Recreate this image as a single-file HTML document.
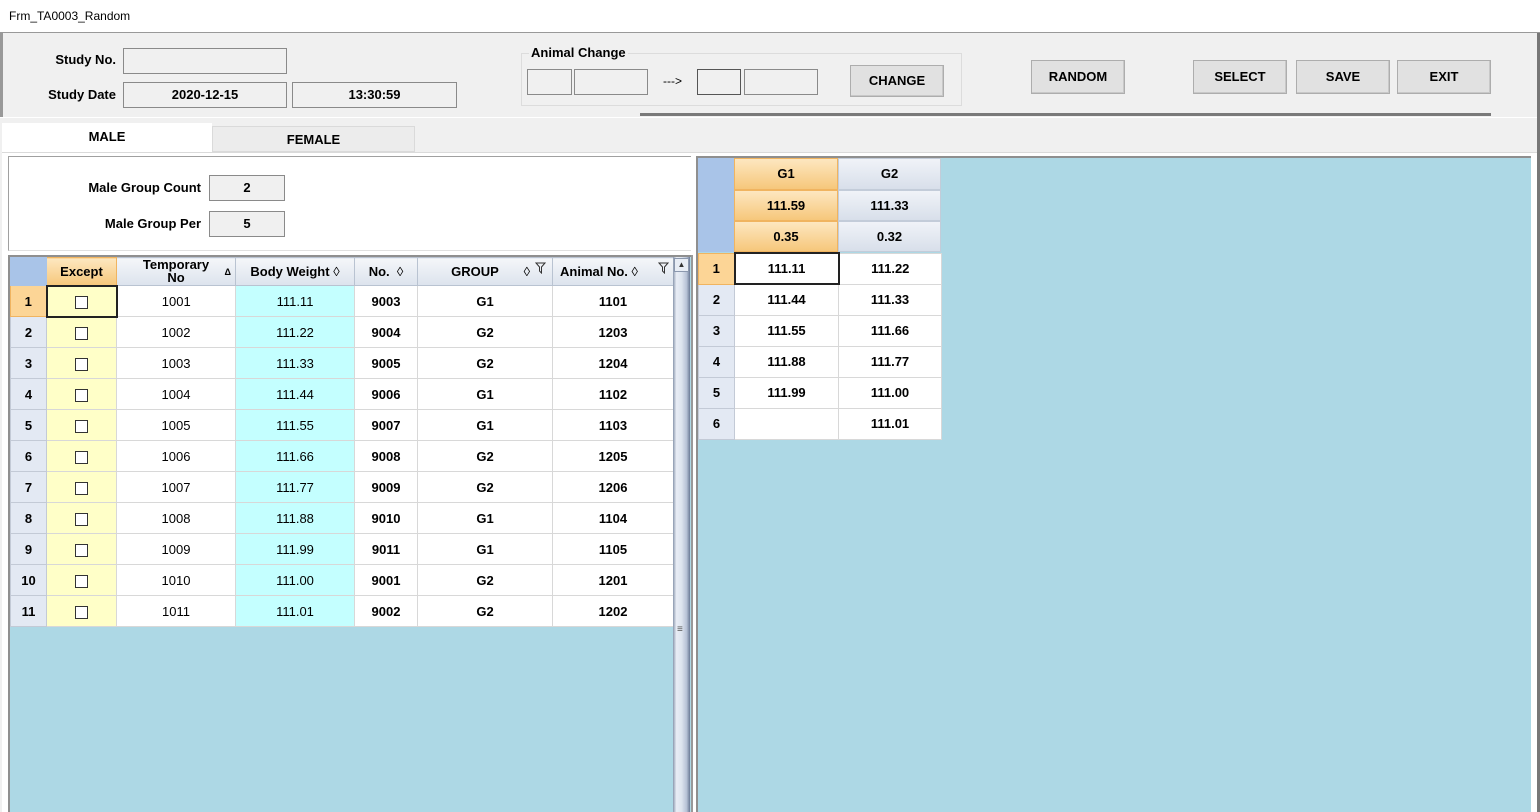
<!DOCTYPE html>
<html><head><meta charset="utf-8">
<style>
*{box-sizing:border-box;margin:0;padding:0}
body{width:1540px;height:812px;overflow:hidden;background:#f0f0f0;font-family:"Liberation Sans","Noto Sans CJK KR",sans-serif;position:relative;font-size:13px;color:#000}
.a{position:absolute}
.b{font-weight:bold}
.box{position:absolute;border:1px solid #8a8a8a;background:#f0f0f0;text-align:center;font-weight:bold;font-size:13px}
.btn{position:absolute;border:1px solid #adadad;background:#e1e1e1;text-align:center;font-weight:bold;font-size:13px;box-shadow:inset -1px -1px 0 #c8c8c8}
.lbl{position:absolute;font-weight:bold;text-align:right;font-size:13px}
table{border-collapse:collapse;position:absolute;table-layout:fixed}
td{border:1px solid #d8d8d8;text-align:center;height:31px;font-size:13px;font-weight:bold;overflow:hidden;white-space:nowrap;background:#fff}
td.rh{background:#e3e9f3;border-color:#c3cad6}
td.ex{background:#ffffc8}
td.bw{background:#c4ffff;font-weight:normal}
td.tn{font-weight:normal}
th{height:28px;font-size:13px;font-weight:bold;background:linear-gradient(#f4f6f9,#dce3ed);border:1px solid #b9c3d1;white-space:nowrap;overflow:hidden;position:relative}
.cb{display:inline-block;width:13px;height:13px;border:1px solid #333;background:#fff;vertical-align:middle}
.hg{background:linear-gradient(#fde7c0,#f6c77b);border:1px solid #f0b460}
.hb{background:linear-gradient(#f0f3f8,#d8dfea);border:1px solid #c3ccd9}
.fl{position:absolute;top:4px;width:11px;height:12px}
</style></head><body>
<div class="a" style="left:0;top:0;width:1540px;height:33px;background:#fff;border-bottom:1px solid #999"></div>
<div class="a" style="left:9px;top:9px;font-size:12px">Frm_TA0003_Random</div>
<div class="a" style="left:1537px;top:33px;width:3px;height:779px;background:#777"></div>
<div class="a" style="left:0;top:33px;width:3px;height:85px;background:#999"></div>

<div class="lbl" style="left:30px;top:52px;width:86px">Study No.</div>
<div class="box" style="left:123px;top:48px;width:164px;height:26px"></div>
<div class="lbl" style="left:20px;top:87px;width:96px">Study Date</div>
<div class="box" style="left:123px;top:82px;width:164px;height:26px;line-height:24px">2020-12-15</div>
<div class="box" style="left:292px;top:82px;width:165px;height:26px;line-height:24px">13:30:59</div>

<div class="a" style="left:521px;top:53px;width:441px;height:53px;border:1px solid #dcdcdc"></div>
<div class="a b" style="left:529px;top:45px;background:#f0f0f0;padding:0 2px">Animal Change</div>
<div class="box" style="left:527px;top:69px;width:45px;height:26px"></div>
<div class="box" style="left:574px;top:69px;width:74px;height:26px"></div>
<div class="a" style="left:663px;top:74px;font-size:12px">---&gt;</div>
<div class="box" style="left:697px;top:69px;width:44px;height:26px;border-color:#555"></div>
<div class="box" style="left:744px;top:69px;width:74px;height:26px"></div>
<div class="btn" style="left:850px;top:65px;width:94px;height:32px;line-height:30px">CHANGE</div>
<div class="btn" style="left:1031px;top:60px;width:94px;height:34px;line-height:32px">RANDOM</div>
<div class="btn" style="left:1193px;top:60px;width:94px;height:34px;line-height:32px">SELECT</div>
<div class="btn" style="left:1296px;top:60px;width:94px;height:34px;line-height:32px">SAVE</div>
<div class="btn" style="left:1397px;top:60px;width:94px;height:34px;line-height:32px">EXIT</div>
<div class="a" style="left:640px;top:113px;width:851px;height:3px;background:#7a7a7a"></div>
<div class="a" style="left:0;top:117px;width:1537px;height:1px;background:#fff"></div>

<div class="a b" style="left:2px;top:123px;width:210px;height:31px;background:#fff;text-align:center;line-height:28px">MALE</div>
<div class="a b" style="left:212px;top:126px;width:203px;height:26px;background:#ececec;border:1px solid #dadada;text-align:center;line-height:26px">FEMALE</div>
<div class="a" style="left:2px;top:152px;width:1535px;height:660px;background:#fff;border-top:1px solid #dadada"></div>

<div class="a" style="left:8px;top:156px;width:683px;height:95px;background:#fff;border:1px solid #a0a0a0;border-right:none;border-bottom:1px solid #e0e0e0"></div>
<div class="lbl" style="left:40px;top:180px;width:161px">Male Group Count</div>
<div class="box" style="left:209px;top:175px;width:76px;height:26px;line-height:24px">2</div>
<div class="lbl" style="left:60px;top:216px;width:141px">Male Group Per</div>
<div class="box" style="left:209px;top:211px;width:76px;height:26px;line-height:24px">5</div>

<div class="a" style="left:8px;top:255px;width:683px;height:557px;background:#add8e5;border-left:2px solid #8f8f8f;border-top:2px solid #8f8f8f"></div>
<table style="left:10px;top:257px;width:663px">
<colgroup><col style="width:36px"><col style="width:70px"><col style="width:119px"><col style="width:119px"><col style="width:63px"><col style="width:135px"><col style="width:121px"></colgroup>
<tr style="height:28px"><th style="background:#a9c4e8;border-color:#a9c4e8"></th><th class="hg">Except</th><th style="line-height:13px;vertical-align:top;padding-top:0">Temporary<br>No<span style="position:absolute;right:4px;top:8px;font-size:9px">&#916;</span></th><th>Body Weight <span style="font-weight:normal">&#9674;</span></th><th>No. &nbsp;<span style="font-weight:normal">&#9674;</span></th><th><span style="position:relative;left:-10px">GROUP</span><span style="position:absolute;right:22px;font-weight:normal">&#9674;</span><svg class="fl" style="right:6px" viewBox="0 0 11 12"><path d="M1 1H10L6.5 5V11L4.5 9V5Z" fill="none" stroke="#333"/></svg></th><th style="text-align:left;padding-left:7px">Animal No. <span style="font-weight:normal">&#9674;</span><svg class="fl" style="right:4px" viewBox="0 0 11 12"><path d="M1 1H10L6.5 5V11L4.5 9V5Z" fill="none" stroke="#333"/></svg></th></tr>
<tr><td class="rh" style="background:#fcd596;border-color:#f0b460">1</td><td class="ex" style="border:2px solid #222"><span class="cb"></span></td><td class="tn">1001</td><td class="bw">111.11</td><td>9003</td><td>G1</td><td>1101</td></tr>
<tr><td class="rh">2</td><td class="ex"><span class="cb"></span></td><td class="tn">1002</td><td class="bw">111.22</td><td>9004</td><td>G2</td><td>1203</td></tr>
<tr><td class="rh">3</td><td class="ex"><span class="cb"></span></td><td class="tn">1003</td><td class="bw">111.33</td><td>9005</td><td>G2</td><td>1204</td></tr>
<tr><td class="rh">4</td><td class="ex"><span class="cb"></span></td><td class="tn">1004</td><td class="bw">111.44</td><td>9006</td><td>G1</td><td>1102</td></tr>
<tr><td class="rh">5</td><td class="ex"><span class="cb"></span></td><td class="tn">1005</td><td class="bw">111.55</td><td>9007</td><td>G1</td><td>1103</td></tr>
<tr><td class="rh">6</td><td class="ex"><span class="cb"></span></td><td class="tn">1006</td><td class="bw">111.66</td><td>9008</td><td>G2</td><td>1205</td></tr>
<tr><td class="rh">7</td><td class="ex"><span class="cb"></span></td><td class="tn">1007</td><td class="bw">111.77</td><td>9009</td><td>G2</td><td>1206</td></tr>
<tr><td class="rh">8</td><td class="ex"><span class="cb"></span></td><td class="tn">1008</td><td class="bw">111.88</td><td>9010</td><td>G1</td><td>1104</td></tr>
<tr><td class="rh">9</td><td class="ex"><span class="cb"></span></td><td class="tn">1009</td><td class="bw">111.99</td><td>9011</td><td>G1</td><td>1105</td></tr>
<tr><td class="rh">10</td><td class="ex"><span class="cb"></span></td><td class="tn">1010</td><td class="bw">111.00</td><td>9001</td><td>G2</td><td>1201</td></tr>
<tr><td class="rh">11</td><td class="ex"><span class="cb"></span></td><td class="tn">1011</td><td class="bw">111.01</td><td>9002</td><td>G2</td><td>1202</td></tr>
</table>
<div class="a" style="left:673px;top:257px;width:17px;height:555px;background:linear-gradient(90deg,#8b98ae,#e8edf5 20%,#dde4ef 50%,#b7c2d6 80%,#6b7a96)"></div>
<div class="a" style="left:674px;top:258px;width:15px;height:14px;background:#e8edf5;border:1px solid #8b98ae;font-size:8px;text-align:center;line-height:12px;color:#333">&#9650;</div>
<div class="a" style="left:677px;top:626px;font-size:10px;line-height:8px;color:#555">&#8801;</div>
<div class="a" style="left:691px;top:255px;width:2px;height:557px;background:#999"></div>

<div class="a" style="left:696px;top:156px;width:835px;height:656px;background:#add8e5;border-left:2px solid #8f8f8f;border-top:2px solid #8f8f8f"></div>
<div class="a" style="left:698px;top:158px;width:36px;height:94px;background:#a9c4e8"></div>
<div class="a hg b" style="left:734px;top:158px;width:104px;height:32px;text-align:center;line-height:30px">G1</div>
<div class="a hb b" style="left:838px;top:158px;width:103px;height:32px;text-align:center;line-height:30px">G2</div>
<div class="a hg b" style="left:734px;top:190px;width:104px;height:31px;text-align:center;line-height:30px">111.59</div>
<div class="a hb b" style="left:838px;top:190px;width:103px;height:31px;text-align:center;line-height:30px">111.33</div>
<div class="a hg b" style="left:734px;top:221px;width:104px;height:31px;text-align:center;line-height:30px">0.35</div>
<div class="a hb b" style="left:838px;top:221px;width:103px;height:31px;text-align:center;line-height:30px">0.32</div>
<table style="left:698px;top:252px;width:243px">
<colgroup><col style="width:36px"><col style="width:104px"><col style="width:103px"></colgroup>
<tr><td class="rh" style="background:#fcd596;border-color:#f0b460">1</td><td style="border:2px solid #222">111.11</td><td>111.22</td></tr>
<tr><td class="rh">2</td><td>111.44</td><td>111.33</td></tr>
<tr><td class="rh">3</td><td>111.55</td><td>111.66</td></tr>
<tr><td class="rh">4</td><td>111.88</td><td>111.77</td></tr>
<tr><td class="rh">5</td><td>111.99</td><td>111.00</td></tr>
<tr><td class="rh">6</td><td></td><td>111.01</td></tr>
</table>
</body></html>
